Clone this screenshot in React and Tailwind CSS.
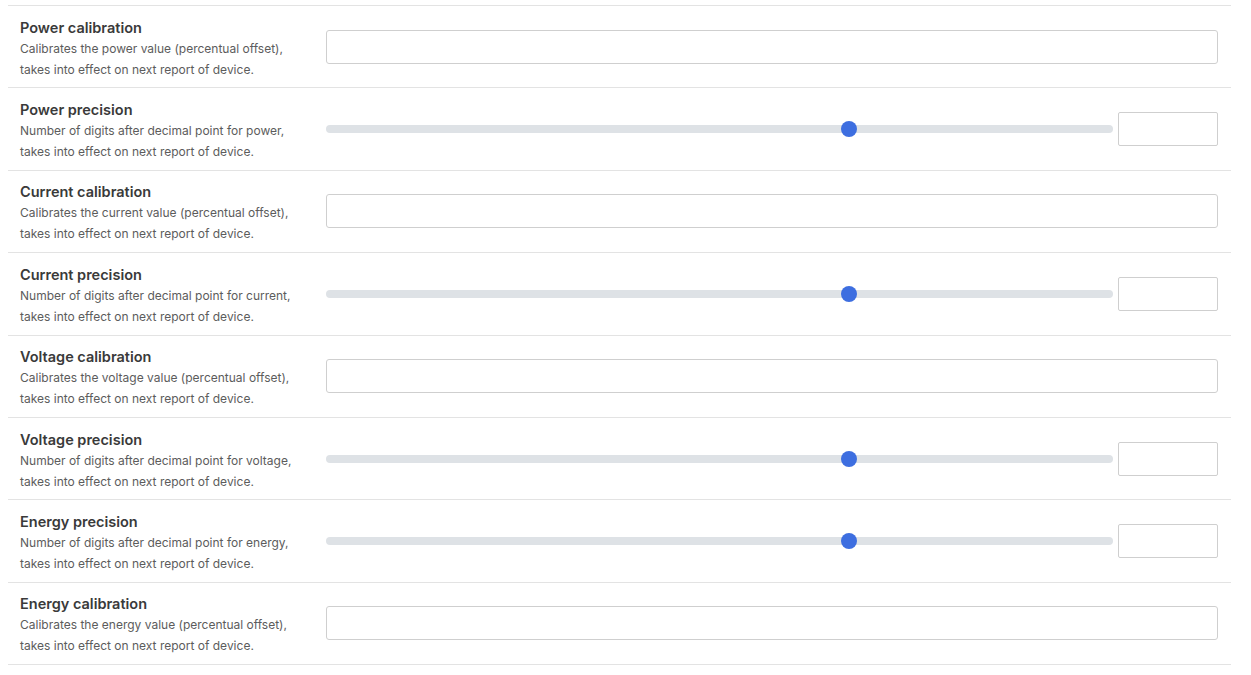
import React from 'react';

const rows = [
  { title: 'Power calibration', desc: ['Calibrates the power value (percentual offset),', 'takes into effect on next report of device.'], type: 'input' },
  { title: 'Power precision', desc: ['Number of digits after decimal point for power,', 'takes into effect on next report of device.'], type: 'slider' },
  { title: 'Current calibration', desc: ['Calibrates the current value (percentual offset),', 'takes into effect on next report of device.'], type: 'input' },
  { title: 'Current precision', desc: ['Number of digits after decimal point for current,', 'takes into effect on next report of device.'], type: 'slider' },
  { title: 'Voltage calibration', desc: ['Calibrates the voltage value (percentual offset),', 'takes into effect on next report of device.'], type: 'input' },
  { title: 'Voltage precision', desc: ['Number of digits after decimal point for voltage,', 'takes into effect on next report of device.'], type: 'slider' },
  { title: 'Energy precision', desc: ['Number of digits after decimal point for energy,', 'takes into effect on next report of device.'], type: 'slider' },
  { title: 'Energy calibration', desc: ['Calibrates the energy value (percentual offset),', 'takes into effect on next report of device.'], type: 'input' },
];

function Slider() {
  return (
    <div className="flex items-center gap-[5px] w-full">
      <div className="flex-1 h-[8px] rounded-full bg-[#dee2e6] relative">
        <div className="absolute left-[66.45%] top-1/2 -translate-x-1/2 -translate-y-1/2 w-[16px] h-[16px] rounded-full bg-[#3d6ee0]" />
      </div>
      <input type="text" className="w-[100px] h-[34px] border border-[#cfcfcf] rounded-[2px] bg-white outline-none" />
    </div>
  );
}

export default function App() {
  return (
    <div className="w-[1251px] h-[675px] bg-white px-2 pt-[5px] font-['Inter','Liberation_Sans',sans-serif]">
      <div className="w-[1223px] border-t border-[#e3e3e3]">
        {rows.map((row) => (
          <div key={row.title} className="h-[82.375px] flex items-center border-b border-[#e3e3e3] pl-3 pr-[13px]">
            <div className="w-[306px] shrink-0 pt-[3px]">
              <div className="text-[14.5px] leading-[21px] font-semibold text-[#3a3a3a]">{row.title}</div>
              <div className="text-[12px] leading-[21px] text-[#5c5c5c]">
                {row.desc.map((line) => (
                  <div key={line}>{line}</div>
                ))}
              </div>
            </div>
            <div className="flex-1 flex items-center">
              {row.type === 'input' ? (
                <input type="text" className="w-full h-[34px] border border-[#cfcfcf] rounded-[3px] bg-white outline-none" />
              ) : (
                <Slider />
              )}
            </div>
          </div>
        ))}
      </div>
    </div>
  );
}
